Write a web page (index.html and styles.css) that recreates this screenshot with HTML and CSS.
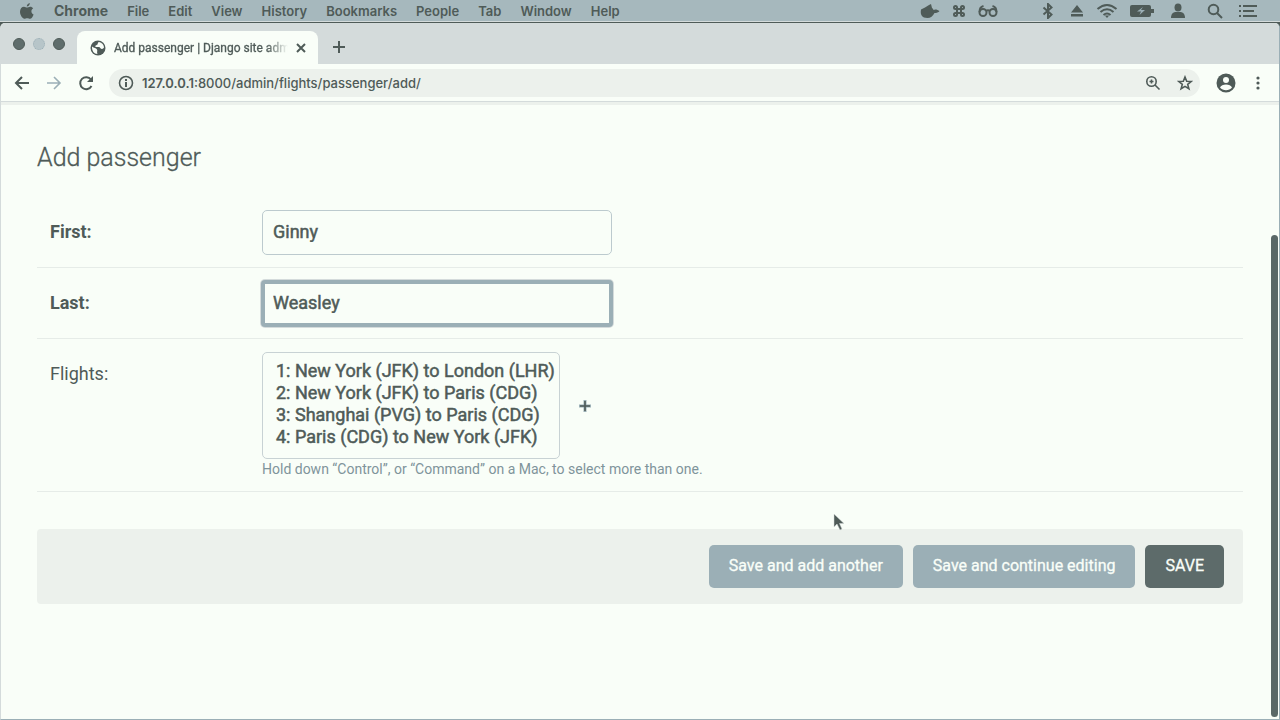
FILE: index.html
```html
<!DOCTYPE html>
<html lang="en">
<head>
<meta charset="utf-8">
<title>Add passenger | Django site admin</title>
<link rel="stylesheet" href="styles.css">
</head>
<body>
<header class="menubar">
  <svg class="apple" width="14" height="18" viewBox="0 0 14 18"><path d="M9.800 1c0 2-1.300 3.400-3 3.500C6.700 2.700 8.200 1.200 9.800 1zM7 5.600c.8 0 1.800-.9 3.200-.9 1.200 0 2.300.6 3 1.600-2.600 1.500-2.200 5.100.4 6.200-.7 2-2.100 4.300-3.600 4.300-1 0-1.500-.6-2.800-.6s-1.900.6-2.800.6C2.400 16.800 0 12.900 0 9.800 0 6.700 1.900 4.800 4 4.800c1.300 0 2.200.8 3 .8z"/></svg>
  <nav class="menus">
    <button class="menu menu-app">Chrome</button>
    <button class="menu">File</button>
    <button class="menu">Edit</button>
    <button class="menu">View</button>
    <button class="menu">History</button>
    <button class="menu">Bookmarks</button>
    <button class="menu">People</button>
    <button class="menu">Tab</button>
    <button class="menu">Window</button>
    <button class="menu">Help</button>
  </nav>
  <div class="status">
    <svg width="20" height="16" viewBox="0 0 20 16"><path d="M1 6.500l4-2L9 2l2-1 1 4c1 .5 1.300 1.200 1.500 2 1.500-1.200 4-.5 6 .9-1 1.500-3 2-5 2-1.500 3-4 5.100-7 5.100C2 15 0 12 1 6.500z"/></svg>
    <svg width="14" height="14" viewBox="0 0 14 14"><path class="line thick" d="M5 5h4v4H5zM5 5H3.500A1.500 1.500 0 1 1 5 3.500zM9 5V3.500A1.500 1.500 0 1 1 10.500 5zM9 9h1.500A1.500 1.500 0 1 1 9 10.500zM5 9v1.500A1.500 1.500 0 1 1 3.500 9z"/></svg>
    <svg class="group-end" width="20" height="14" viewBox="0 0 20 14"><g class="line thick"><circle cx="5" cy="8.500" r="3.500"/><circle cx="15" cy="8.500" r="3.500"/><path d="M8 7q2-1.500 4 0M1.500 8q0-5 4-6M18.500 8q0-5-4-6"/></g></svg>
    <svg class="spaced" width="12" height="16" viewBox="0 0 12 16"><path class="line thick" d="M1.500 4.500l8 7L6 15V1l3.500 3.500-8 7"/></svg>
    <svg width="14" height="14" viewBox="0 0 14 14"><path d="M7 1l6 7.500H1zM1 10h12v2.500H1z"/></svg>
    <svg width="22" height="16" viewBox="0 0 22 16"><path class="line thick" d="M1.500 6q9.500-8 19 0M4.500 9q6.500-5.500 13 0M7.500 12q3.500-3 7 0"/><path d="M8.800 12.500h4.400L11 15z"/></svg>
    <svg class="spaced" width="24" height="14" viewBox="0 0 24 14"><rect x="0" y="1" width="21" height="12" rx="2"/><path d="M21 5h3v4h-3z"/><path class="cut" d="M13 3l-6 4.500h4L9.500 11l5.500-5h-4z"/></svg>
    <svg class="spaced" width="16" height="16" viewBox="0 0 16 16"><ellipse cx="8" cy="4.500" rx="3.500" ry="4"/><path d="M1 15c0-4 2-6 5-6h4c3 0 5 2 5 6z"/></svg>
    <svg class="search" width="16" height="16" viewBox="0 0 16 16"><g class="line thick"><circle cx="6.500" cy="6.500" r="4.800"/><path d="M10 10l5 5"/></g></svg>
    <svg width="18" height="14" viewBox="0 0 18 14"><path d="M0 1h2v2H0zM0 6h2v2H0zM0 11h2v2H0zM4 1h14v2H4zM4 6h11v2H4zM4 11h14v2H4z"/></svg>
  </div>
</header>
<div class="window">
  <div class="tabstrip">
    <div class="lights"><i class="light"></i><i class="light light-pale"></i><i class="light"></i></div>
    <div class="tab">
      <svg width="16" height="16" viewBox="0 0 16 16"><circle cx="8" cy="8" r="7.500"/><path class="land" d="M2 6.500c2 2 4 1.300 5 3 .8 1.500-.5 2.500.5 4.500C4 14 1.800 11 2 6.500zM9 2c-2 1-.5 2-2 2.800C6 5.500 5 5.500 5.500 7H9c1 0 1.500 2 3 2 1 0 1.500-1 2-1.500C14 5 12 2.500 9 2z"/></svg>
      <span class="tab-title">Add passenger | Django site adm</span>
      <button class="icon" aria-label="Close tab"><svg width="10" height="10" viewBox="0 0 10 10"><path class="line thick" d="M1 1l8 8M9 1L1 9"/></svg></button>
    </div>
    <button class="icon new-tab" aria-label="New tab"><svg width="12" height="12" viewBox="0 0 12 12"><path class="line thick" d="M6 0v12M0 6h12"/></svg></button>
  </div>
  <div class="toolbar">
    <button class="icon" aria-label="Back"><svg width="16" height="16" viewBox="0 0 16 16"><path class="line thick" d="M15 8H2M8 2L2 8l6 6"/></svg></button>
    <button class="icon icon-pale" aria-label="Forward"><svg width="16" height="16" viewBox="0 0 16 16"><path class="line" d="M1 8h13M8 2l6 6-6 6"/></svg></button>
    <button class="icon" aria-label="Reload"><svg width="16" height="16" viewBox="0 0 16 16"><path class="line thick" d="M13.500 11A6 6 0 1 1 13 4.500"/><path d="M15 1v6H9z"/></svg></button>
    <div class="address">
      <svg width="16" height="16" viewBox="0 0 16 16"><circle class="line" cx="8" cy="8" r="6.500"/><path d="M7 7h2v5H7zM7 4h2v2H7z"/></svg>
      <span class="url"><span class="host">127.0.0.1</span>:8000/admin/flights/passenger/add/</span>
      <button class="icon" aria-label="Zoom"><svg width="16" height="16" viewBox="0 0 16 16"><g class="line"><circle cx="6.500" cy="6.500" r="4.700"/><path d="M10 10l4.500 4.500"/><path d="M4.500 6.500h4M6.500 4.500v4"/></g></svg></button>
      <button class="icon" aria-label="Bookmark"><svg width="16" height="16" viewBox="0 0 16 16"><path class="line" d="M8 2l1.700 4.200 4.500.3-3.500 2.900 1.200 4.400L8 11.400l-3.900 2.400 1.200-4.400-3.500-2.900 4.500-.3z"/></svg></button>
    </div>
    <button class="icon" aria-label="Profile"><svg width="20" height="20" viewBox="0 0 20 20"><circle cx="10" cy="10" r="9.500"/><g class="land"><circle cx="10" cy="7" r="3"/><path d="M4 14.500c1.500-4 10.500-4 12 0-3 3.500-9 3.500-12 0z"/></g></svg></button>
    <button class="icon more" aria-label="Menu"><svg width="4" height="16" viewBox="0 0 4 16"><circle cx="2" cy="3" r="1.600"/><circle cx="2" cy="8" r="1.600"/><circle cx="2" cy="13" r="1.600"/></svg></button>
  </div>
  <main class="page">
    <h1 class="title">Add passenger</h1>
    <form class="form">
      <div class="row">
        <label class="label required" for="first">First:</label>
        <input class="text" id="first" type="text" value="Ginny">
      </div>
      <div class="row">
        <label class="label required" for="last">Last:</label>
        <input class="text text-active" id="last" type="text" value="Weasley">
      </div>
      <div class="row">
        <label class="label" for="flights">Flights:</label>
        <div class="field">
          <div class="picker">
            <select class="flights" id="flights" multiple size="4">
              <option>1: New York (JFK) to London (LHR)</option>
              <option>2: New York (JFK) to Paris (CDG)</option>
              <option>3: Shanghai (PVG) to Paris (CDG)</option>
              <option>4: Paris (CDG) to New York (JFK)</option>
            </select>
            <button class="icon add" type="button" aria-label="Add flight"><svg width="12" height="12" viewBox="0 0 12 12"><path class="halo" d="M6 0v12M0 6h12"/><path class="line" d="M6 1v10M1 6h10"/></svg></button>
          </div>
          <p class="help">Hold down “Control”, or “Command” on a Mac, to select more than one.</p>
        </div>
      </div>
      <div class="submit">
        <button class="btn" type="button">Save and add another</button>
        <button class="btn" type="button">Save and continue editing</button>
        <button class="btn btn-main" type="button">SAVE</button>
      </div>
    </form>
    <div class="scrollbar"></div>
  </main>
</div>
<svg class="pointer" width="12" height="19" viewBox="0 0 12 19"><path d="M1 1v13l3-3 3 6 2-1-2.500-5.500H11z"/></svg>
</body>
</html>
```
FILE: styles.css
```css
:root {
  --paper: #f9fef8;
  --mist: #d4dbdb;
  --haze: #ecf1ec;
  --steel: #9bafb6;
  --ink: #4f5b58;
}
* { box-sizing: border-box; }
body {
  margin: 0;
  min-height: 100vh;
  display: flex;
  flex-direction: column;
  background: var(--ink);
  color: var(--ink);
  font-family: Roboto, sans-serif;
}
button { font: inherit; color: inherit; border: 0; background: none; padding: 0; }
svg { display: block; flex: none; fill: currentColor; }
.line { fill: none; stroke: currentColor; stroke-width: 1.6; }
.thick { stroke-width: 2; }
.land { fill: var(--paper); }
.cut { fill: var(--steel); }
.halo { fill: none; stroke: var(--steel); stroke-width: 3; }

.menubar {
  height: 22px;
  display: flex;
  align-items: center;
  padding: 0 23px 0 20px;
  background: #a6b8bd;
  border-bottom: 1px solid var(--mist);
}
.menus { display: flex; align-items: center; gap: 19px; margin-left: 20px; font: 600 13px/20px Inter, sans-serif; }
.menu-app { font-size: 14px; font-weight: 700; }
.status { display: flex; align-items: center; gap: 12px; margin-left: auto; }
.group-end { margin-right: 32px; }
.spaced { margin-right: 4px; }
.search { margin: 0 4px 0 5px; }

.window {
  flex: 1;
  display: flex;
  flex-direction: column;
  margin-top: 1px;
  background: var(--paper);
  border: 1px solid var(--steel);
  border-top: 0;
  border-left-color: var(--mist);
  border-radius: 5px 5px 0 0;
  overflow: hidden;
}
.tabstrip { height: 41px; display: flex; align-items: flex-end; background: var(--mist); }
.lights { display: flex; gap: 8px; padding: 0 12px 14px 12px; }
.light { width: 12px; height: 12px; border-radius: 50%; background: #5f6d6c; border: 1px solid var(--ink); }
.light-pale { background: #b7c5c9; border: 1px dotted var(--steel); }
.tab {
  width: 241px;
  height: 33px;
  display: flex;
  align-items: center;
  gap: 8px;
  padding: 0 11px 0 13px;
  background: var(--paper);
  border-radius: 8px 8px 0 0;
}
.tab-title {
  width: 174px;
  white-space: nowrap;
  font: 12px/16px Roboto, sans-serif;
  -webkit-text-stroke: 0.3px currentColor;
  -webkit-mask-image: linear-gradient(to right, #000 88%, transparent);
  mask-image: linear-gradient(to right, #000 88%, transparent);
}
.new-tab { margin: 0 0 11px 15px; }
.icon-pale { color: var(--steel); }
.toolbar {
  height: 38px;
  display: flex;
  align-items: center;
  gap: 16px;
  padding: 0 19px 0 13px;
  border-bottom: 1px solid var(--mist);
}
.address {
  flex: 1;
  height: 28px;
  display: flex;
  align-items: center;
  gap: 16px;
  margin-left: -1px;
  padding: 0 7px 0 9px;
  background: var(--haze);
  border-radius: 14px;
}
.url { flex: 1; margin-left: -8px; font: 500 13px/20px Inter, sans-serif; }
.host { font-weight: 600; }
.more { margin-left: 4px; }

.page { flex: 1; position: relative; padding: 37px 36px 24px; border-top: 3px solid var(--haze); }
.title { margin: 0 0 23px; font-size: 25px; line-height: 32px; font-weight: 300; -webkit-text-stroke: 0.3px currentColor; }
.row { display: flex; align-items: flex-start; padding: 13px 13px 12px; border-bottom: 1px solid #e6ece8; }
.label { width: 212px; font-size: 18px; line-height: 44px; }
.required { font-weight: 700; }
.text {
  width: 350px;
  height: 45px;
  margin: 0;
  padding: 0 10px 2px;
  border: 1px solid #bccace;
  border-radius: 5px;
  outline: 0;
  background: var(--paper);
  color: var(--ink);
  font: 18px/24px Roboto, sans-serif;
  -webkit-text-stroke: 0.5px currentColor;
}
.text-active { border: 3px solid var(--steel); padding: 0 8px 2px; box-shadow: 0 0 0 1px var(--steel), 0 0 0 2px var(--mist); border-radius: 3px; }
.picker { display: flex; align-items: center; gap: 19px; }
.flights {
  width: 298px;
  height: 107px;
  margin: 0;
  padding: 7px 11px;
  overflow: hidden;
  border: 1px solid #c8d2d4;
  border-radius: 5px;
  outline: 0;
  background: var(--paper);
  color: var(--ink);
  font: 18px/22px Roboto, sans-serif;
}
.flights option { min-height: 22px; padding: 0 2px; font: inherit; color: var(--ink); -webkit-text-stroke: 0.5px currentColor; }
.help { margin: 0; color: #7f949b; font-size: 14px; line-height: 20px; }
.submit {
  display: flex;
  justify-content: flex-end;
  gap: 10px;
  margin-top: 37px;
  padding: 16px 19px;
  background: var(--haze);
  border-radius: 4px;
}
.btn {
  height: 43px;
  padding: 0 20px 2px;
  border-radius: 5px;
  background: var(--steel);
  color: var(--paper);
  font-size: 16px;
  line-height: 24px;
  -webkit-text-stroke: 0.3px currentColor;
}
.btn-main { background: #5d6b6a; }
.scrollbar {
  position: absolute;
  top: 130px;
  right: 1px;
  bottom: 2px;
  width: 7px;
  border-radius: 4px;
  background: #5a6867;
}
.pointer { position: absolute; left: 833px; top: 513px; stroke: var(--mist); stroke-width: 0.5; }
```
